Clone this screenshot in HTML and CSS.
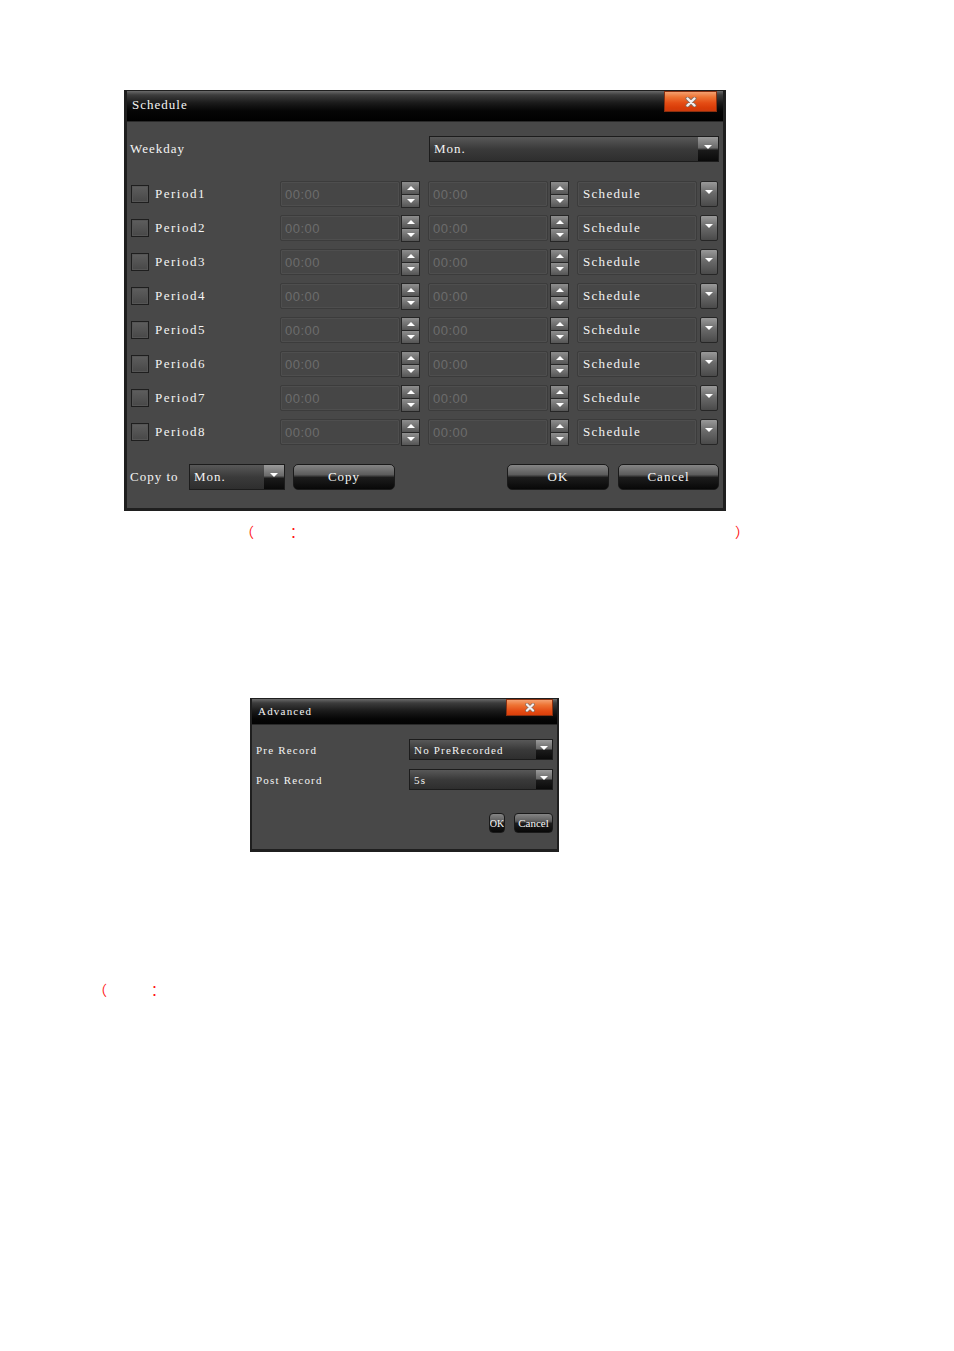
FILE: index.html
```html
<!DOCTYPE html>
<html>
<head>
<meta charset="utf-8">
<link rel="stylesheet" href="styles.css">
</head>
<body>
<div class="page">
  <div class="dlg dlg-schedule">
    <div class="titlebar">
      <span class="title">Schedule</span>
      <span class="close"><svg width="14" height="10" viewBox="0 0 14 10"><path d="M3.5 1.5 L10.5 8.5 M10.5 1.5 L3.5 8.5" stroke="#8a6a5a" stroke-width="4" stroke-linecap="round"/><path d="M3.5 1.5 L10.5 8.5 M10.5 1.5 L3.5 8.5" stroke="#f4f0f0" stroke-width="2.4" stroke-linecap="round"/></svg></span>
    </div>
    <div class="body">
      <div class="weekday-row">
        <span class="lbl">Weekday</span>
        <div class="combo combo-dark combo-week"><span class="combo-text">Mon.</span><span class="combo-btn"></span></div>
      </div>
      <div class="periods">
        <div class="prow"><span class="check"></span><span class="plbl">Period1</span><span class="time">00:00</span><span class="spin"><span class="spin-up"></span><span class="spin-down"></span></span><span class="time time2">00:00</span><span class="spin spin2"><span class="spin-up"></span><span class="spin-down"></span></span><div class="combo combo-sched"><span class="combo-text">Schedule</span><span class="combo-btn"></span></div></div>
        <div class="prow"><span class="check"></span><span class="plbl">Period2</span><span class="time">00:00</span><span class="spin"><span class="spin-up"></span><span class="spin-down"></span></span><span class="time time2">00:00</span><span class="spin spin2"><span class="spin-up"></span><span class="spin-down"></span></span><div class="combo combo-sched"><span class="combo-text">Schedule</span><span class="combo-btn"></span></div></div>
        <div class="prow"><span class="check"></span><span class="plbl">Period3</span><span class="time">00:00</span><span class="spin"><span class="spin-up"></span><span class="spin-down"></span></span><span class="time time2">00:00</span><span class="spin spin2"><span class="spin-up"></span><span class="spin-down"></span></span><div class="combo combo-sched"><span class="combo-text">Schedule</span><span class="combo-btn"></span></div></div>
        <div class="prow"><span class="check"></span><span class="plbl">Period4</span><span class="time">00:00</span><span class="spin"><span class="spin-up"></span><span class="spin-down"></span></span><span class="time time2">00:00</span><span class="spin spin2"><span class="spin-up"></span><span class="spin-down"></span></span><div class="combo combo-sched"><span class="combo-text">Schedule</span><span class="combo-btn"></span></div></div>
        <div class="prow"><span class="check"></span><span class="plbl">Period5</span><span class="time">00:00</span><span class="spin"><span class="spin-up"></span><span class="spin-down"></span></span><span class="time time2">00:00</span><span class="spin spin2"><span class="spin-up"></span><span class="spin-down"></span></span><div class="combo combo-sched"><span class="combo-text">Schedule</span><span class="combo-btn"></span></div></div>
        <div class="prow"><span class="check"></span><span class="plbl">Period6</span><span class="time">00:00</span><span class="spin"><span class="spin-up"></span><span class="spin-down"></span></span><span class="time time2">00:00</span><span class="spin spin2"><span class="spin-up"></span><span class="spin-down"></span></span><div class="combo combo-sched"><span class="combo-text">Schedule</span><span class="combo-btn"></span></div></div>
        <div class="prow"><span class="check"></span><span class="plbl">Period7</span><span class="time">00:00</span><span class="spin"><span class="spin-up"></span><span class="spin-down"></span></span><span class="time time2">00:00</span><span class="spin spin2"><span class="spin-up"></span><span class="spin-down"></span></span><div class="combo combo-sched"><span class="combo-text">Schedule</span><span class="combo-btn"></span></div></div>
        <div class="prow"><span class="check"></span><span class="plbl">Period8</span><span class="time">00:00</span><span class="spin"><span class="spin-up"></span><span class="spin-down"></span></span><span class="time time2">00:00</span><span class="spin spin2"><span class="spin-up"></span><span class="spin-down"></span></span><div class="combo combo-sched"><span class="combo-text">Schedule</span><span class="combo-btn"></span></div></div>
      </div>
      <div class="bottom-row">
        <span class="lbl copy-lbl">Copy to</span>
        <div class="combo combo-dark combo-copy"><span class="combo-text">Mon.</span><span class="combo-btn"></span></div>
        <span class="btn btn-copy">Copy</span>
        <span class="spacer"></span>
        <span class="btn btn-ok">OK</span>
        <span class="btn btn-cancel">Cancel</span>
      </div>
    </div>
  </div>

  <div class="caption caption1"><span class="c-open">（</span><span class="c-colon">：</span><span class="c-close">）</span></div>

  <div class="dlg dlg-adv">
    <div class="titlebar titlebar-adv">
      <span class="title title-adv">Advanced</span>
      <span class="close close-adv"><svg width="12" height="9" viewBox="0 0 12 9"><path d="M3 1.5 L9 7.5 M9 1.5 L3 7.5" stroke="#8a6a5a" stroke-width="3.6" stroke-linecap="round"/><path d="M3 1.5 L9 7.5 M9 1.5 L3 7.5" stroke="#f4f0f0" stroke-width="2.2" stroke-linecap="round"/></svg></span>
    </div>
    <div class="body body-adv">
      <div class="adv-row">
        <span class="lbl lbl-adv">Pre Record</span>
        <div class="combo combo-dark combo-adv"><span class="combo-text">No PreRecorded</span><span class="combo-btn"></span></div>
      </div>
      <div class="adv-row adv-row2">
        <span class="lbl lbl-adv">Post Record</span>
        <div class="combo combo-dark combo-adv"><span class="combo-text">5s</span><span class="combo-btn"></span></div>
      </div>
      <div class="adv-buttons">
        <span class="btn btn-small btn-ok-small">OK</span>
        <span class="btn btn-small btn-cancel-small">Cancel</span>
      </div>
    </div>
  </div>

  <div class="caption caption2"><span class="c-open2">（</span><span class="c-colon2">：</span></div>
</div>
</body>
</html>
```

FILE: styles.css
```css
html, body {
  margin: 0;
  padding: 0;
  background: #ffffff;
}

.page {
  width: 954px;
  height: 1351px;
  padding-top: 90px;
  box-sizing: border-box;
  font-family: "Liberation Serif", "Times New Roman", serif;
}

.dlg {
  box-sizing: border-box;
  background: #1f1f1f;
  display: flex;
  flex-direction: column;
}

.dlg-schedule {
  margin-left: 124px;
  width: 602px;
  height: 421px;
  padding: 1px 3px 3px 3px;
}

.titlebar {
  height: 30px;
  flex: none;
  display: flex;
  align-items: flex-start;
  justify-content: space-between;
  background: linear-gradient(#6a6a6a 0px, #3c3c3c 4px, #1a1a1a 12px, #050505 20px, #000000 30px);
  border-bottom: 1px solid #2a2a2a;
}

.title {
  color: #f4f4f4;
  font-size: 13px;
  letter-spacing: 1px;
  line-height: 13px;
  margin-top: 7px;
  margin-left: 5px;
}

.close {
  width: 53px;
  height: 21px;
  margin-right: 6px;
  box-sizing: border-box;
  border: 1px solid #8a3010;
  background: linear-gradient(#f4a070 0px, #ee7434 5px, #e44c14 11px, #d83c08 16px, #c83a10 21px);
  display: flex;
  align-items: center;
  justify-content: center;
}

.body {
  flex: 1;
  background: #484848;
  padding: 14px 4px 0 3px;
  display: flex;
  flex-direction: column;
}

.lbl {
  color: #f4f4f4;
  font-size: 13px;
  letter-spacing: 1px;
}

.weekday-row {
  display: flex;
  align-items: center;
  justify-content: space-between;
  height: 26px;
}

.combo {
  display: flex;
  box-sizing: border-box;
  height: 26px;
}

.combo-text {
  flex: 1;
  color: #f4f4f4;
  font-size: 13px;
  letter-spacing: 1px;
  display: flex;
  align-items: center;
  padding-left: 4px;
}

.combo-dark {
  border: 1px solid #1c1c1c;
  background: linear-gradient(#585858, #3a3a3a 50%, #2e2e2e);
}

.combo-dark .combo-btn {
  width: 20px;
  background: linear-gradient(#9a9a9a 0%, #6a6a6a 45%, #1a1a1a 55%, #0a0a0a 100%);
  position: relative;
}

.combo-btn::after {
  content: "";
  position: absolute;
  left: 50%;
  top: 8px;
  margin-left: -4px;
  border-left: 4px solid transparent;
  border-right: 4px solid transparent;
  border-top: 4px solid #ffffff;
}

.combo-week {
  width: 290px;
}

.periods {
  margin-top: 19px;
  display: flex;
  flex-direction: column;
  gap: 8px;
}

.prow {
  height: 26px;
  display: flex;
  align-items: center;
}

.check {
  width: 18px;
  height: 18px;
  margin-left: 1px;
  box-sizing: border-box;
  border: 1px solid #1e1e1e;
  background: linear-gradient(#5e5e5e, #484848);
  box-shadow: inset 0 0 0 1px #555;
}

.plbl {
  width: 125px;
  margin-left: 6px;
  color: #f4f4f4;
  font-size: 13px;
  letter-spacing: 1.5px;
}

.time {
  width: 120px;
  height: 26px;
  box-sizing: border-box;
  border: 1px solid #3c3c3c;
  border-radius: 2px;
  box-shadow: inset 0 0 0 1px #4e4e4e;
  background: #464646;
  color: #6c6c6c;
  font-family: "Liberation Sans", Arial, sans-serif;
  font-size: 13px;
  letter-spacing: 0.5px;
  display: flex;
  align-items: center;
  padding-left: 4px;
}

.time2 {
  margin-left: 8px;
}

.spin {
  width: 19px;
  height: 27px;
  margin-left: 1px;
  display: flex;
  flex-direction: column;
  box-sizing: border-box;
  border: 1px solid #262626;
  background: #262626;
  gap: 1px;
}

.spin2 {
  margin-left: 2px;
}

.spin-up, .spin-down {
  flex: 1;
  position: relative;
  background: linear-gradient(#8e8e8e, #555555);
}

.spin-up::after {
  content: "";
  position: absolute;
  left: 50%;
  top: 4px;
  margin-left: -4px;
  border-left: 4px solid transparent;
  border-right: 4px solid transparent;
  border-bottom: 4px solid #ffffff;
}

.spin-down::after {
  content: "";
  position: absolute;
  left: 50%;
  top: 4px;
  margin-left: -4px;
  border-left: 4px solid transparent;
  border-right: 4px solid transparent;
  border-top: 4px solid #ffffff;
}

.combo-sched {
  margin-left: 8px;
  width: 141px;
  border: none;
}

.combo-sched .combo-text {
  border: 1px solid #3c3c3c;
  border-radius: 2px;
  box-shadow: inset 0 0 0 1px #4e4e4e;
  background: #464646;
  font-size: 13px;
  letter-spacing: 1.3px;
  padding-left: 5px;
}

.combo-sched .combo-btn {
  width: 18px;
  margin-left: 3px;
  box-sizing: border-box;
  border: 1px solid #262626;
  border-radius: 2px;
  background: linear-gradient(#9a9a9a, #6a6a6a 45%, #4a4a4a);
  position: relative;
}

.bottom-row {
  margin-top: 19px;
  height: 26px;
  display: flex;
  align-items: center;
}

.copy-lbl {
  width: 59px;
}

.combo-copy {
  width: 96px;
}

.btn {
  box-sizing: border-box;
  height: 26px;
  border: 1px solid #1a1a1a;
  border-radius: 5px;
  background: linear-gradient(#858585 0%, #5c5c5c 40%, #1c1c1c 52%, #080808 100%);
  color: #f8f8f8;
  font-size: 13px;
  letter-spacing: 1px;
  display: flex;
  align-items: center;
  justify-content: center;
}

.btn-copy {
  margin-left: 8px;
  width: 102px;
}

.spacer {
  flex: 1;
}

.btn-ok {
  width: 102px;
}

.btn-cancel {
  width: 101px;
  margin-left: 9px;
}

/* captions */
.caption {
  height: 16px;
  color: #ff1010;
  font-family: "Noto Sans CJK SC", sans-serif;
  font-size: 14px;
  line-height: 16px;
  display: flex;
}

.caption1 {
  margin-top: 12px;
}

.c-open {
  margin-left: 240px;
}

.c-colon {
  margin-left: 36px;
}

.c-close {
  margin-left: 431px;
}

/* advanced dialog */
.dlg-adv {
  margin-top: 159px;
  margin-left: 250px;
  width: 309px;
  height: 154px;
  padding: 1px 2px 3px 2px;
}

.titlebar-adv {
  height: 25px;
}

.title-adv {
  font-size: 11px;
  letter-spacing: 1.2px;
  line-height: 11px;
  margin-top: 7px;
  margin-left: 6px;
}

.close-adv {
  width: 47px;
  height: 17px;
  margin-right: 4px;
}

.body-adv {
  padding: 14px 4px 0 4px;
}

.adv-row {
  display: flex;
  align-items: center;
  justify-content: space-between;
  height: 21px;
}

.adv-row2 {
  margin-top: 9px;
}

.lbl-adv {
  font-size: 11px;
  letter-spacing: 1.2px;
}

.combo-adv {
  width: 144px;
  height: 21px;
}

.combo-adv .combo-text {
  font-size: 11px;
  letter-spacing: 1.2px;
}

.combo-adv .combo-btn {
  width: 16px;
}

.combo-adv .combo-btn::after {
  top: 6px;
}

.adv-buttons {
  margin-top: 23px;
  display: flex;
  justify-content: flex-end;
  gap: 9px;
}

.btn-small {
  height: 20px;
  font-size: 11px;
  letter-spacing: 0;
  border-radius: 4px;
  overflow: hidden;
}

.btn-ok-small {
  width: 16px;
  font-size: 10px;
}

.btn-cancel-small {
  width: 39px;
}

.caption2 {
  margin-top: 129px;
}

.c-open2 {
  margin-left: 93px;
}

.c-colon2 {
  margin-left: 44px;
}
```
